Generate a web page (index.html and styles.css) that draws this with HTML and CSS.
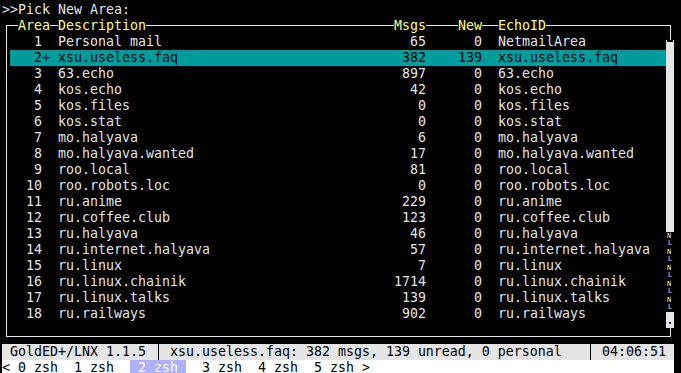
FILE: index.html
```html
<!DOCTYPE html>
<html lang="en">
<head>
    <meta charset="UTF-8">
    <meta name="viewport" content="width=device-width, initial-scale=1.0">
    <title>GoldED+ - Pick New Area</title>
    <link rel="stylesheet" href="styles.css">
</head>
<body>
    <div class="screen">
        <div class="line">&gt;&gt;Pick New Area:</div>

        <!-- Area list window -->
        <div class="panel">
            <div class="area-row area-head">
                <div class="col-num"><span class="label">Area</span></div>
                <div class="col-flag"></div>
                <div class="col-desc"><span class="label">Description</span></div>
                <div class="col-msgs"><span class="label">Msgs</span></div>
                <div class="col-new"><span class="label">New</span></div>
                <div class="col-echo"><span class="label">EchoID</span></div>
            </div>

            <div class="panel-body">
                <div class="area-list">
                    <div class="area-row"><div class="col-num">1</div><div class="col-flag"></div><div class="col-desc">Personal mail</div><div class="col-msgs">65</div><div class="col-new">0</div><div class="col-echo">NetmailArea</div></div>
                    <div class="area-row selected"><div class="col-num">2</div><div class="col-flag">+</div><div class="col-desc">xsu.useless.faq</div><div class="col-msgs">382</div><div class="col-new">139</div><div class="col-echo">xsu.useless.faq</div></div>
                    <div class="area-row"><div class="col-num">3</div><div class="col-flag"></div><div class="col-desc">63.echo</div><div class="col-msgs">897</div><div class="col-new">0</div><div class="col-echo">63.echo</div></div>
                    <div class="area-row"><div class="col-num">4</div><div class="col-flag"></div><div class="col-desc">kos.echo</div><div class="col-msgs">42</div><div class="col-new">0</div><div class="col-echo">kos.echo</div></div>
                    <div class="area-row"><div class="col-num">5</div><div class="col-flag"></div><div class="col-desc">kos.files</div><div class="col-msgs">0</div><div class="col-new">0</div><div class="col-echo">kos.files</div></div>
                    <div class="area-row"><div class="col-num">6</div><div class="col-flag"></div><div class="col-desc">kos.stat</div><div class="col-msgs">0</div><div class="col-new">0</div><div class="col-echo">kos.stat</div></div>
                    <div class="area-row"><div class="col-num">7</div><div class="col-flag"></div><div class="col-desc">mo.halyava</div><div class="col-msgs">6</div><div class="col-new">0</div><div class="col-echo">mo.halyava</div></div>
                    <div class="area-row"><div class="col-num">8</div><div class="col-flag"></div><div class="col-desc">mo.halyava.wanted</div><div class="col-msgs">17</div><div class="col-new">0</div><div class="col-echo">mo.halyava.wanted</div></div>
                    <div class="area-row"><div class="col-num">9</div><div class="col-flag"></div><div class="col-desc">roo.local</div><div class="col-msgs">81</div><div class="col-new">0</div><div class="col-echo">roo.local</div></div>
                    <div class="area-row"><div class="col-num">10</div><div class="col-flag"></div><div class="col-desc">roo.robots.loc</div><div class="col-msgs">0</div><div class="col-new">0</div><div class="col-echo">roo.robots.loc</div></div>
                    <div class="area-row"><div class="col-num">11</div><div class="col-flag"></div><div class="col-desc">ru.anime</div><div class="col-msgs">229</div><div class="col-new">0</div><div class="col-echo">ru.anime</div></div>
                    <div class="area-row"><div class="col-num">12</div><div class="col-flag"></div><div class="col-desc">ru.coffee.club</div><div class="col-msgs">123</div><div class="col-new">0</div><div class="col-echo">ru.coffee.club</div></div>
                    <div class="area-row"><div class="col-num">13</div><div class="col-flag"></div><div class="col-desc">ru.halyava</div><div class="col-msgs">46</div><div class="col-new">0</div><div class="col-echo">ru.halyava</div></div>
                    <div class="area-row"><div class="col-num">14</div><div class="col-flag"></div><div class="col-desc">ru.internet.halyava</div><div class="col-msgs">57</div><div class="col-new">0</div><div class="col-echo">ru.internet.halyava</div></div>
                    <div class="area-row"><div class="col-num">15</div><div class="col-flag"></div><div class="col-desc">ru.linux</div><div class="col-msgs">7</div><div class="col-new">0</div><div class="col-echo">ru.linux</div></div>
                    <div class="area-row"><div class="col-num">16</div><div class="col-flag"></div><div class="col-desc">ru.linux.chainik</div><div class="col-msgs">1714</div><div class="col-new">0</div><div class="col-echo">ru.linux.chainik</div></div>
                    <div class="area-row"><div class="col-num">17</div><div class="col-flag"></div><div class="col-desc">ru.linux.talks</div><div class="col-msgs">139</div><div class="col-new">0</div><div class="col-echo">ru.linux.talks</div></div>
                    <div class="area-row"><div class="col-num">18</div><div class="col-flag"></div><div class="col-desc">ru.railways</div><div class="col-msgs">902</div><div class="col-new">0</div><div class="col-echo">ru.railways</div></div>
                </div>

                <!-- Scrollbar column -->
                <div class="scrollbar">
                    <div class="sb-cell"><span class="sb-thumb"></span></div>
                    <div class="sb-cell"></div>
                    <div class="sb-cell"></div>
                    <div class="sb-cell"></div>
                    <div class="sb-cell"></div>
                    <div class="sb-cell"></div>
                    <div class="sb-cell"></div>
                    <div class="sb-cell"></div>
                    <div class="sb-cell"></div>
                    <div class="sb-cell"></div>
                    <div class="sb-cell"></div>
                    <div class="sb-cell"></div>
                    <div class="sb-cell sb-nl"><span>N</span><span class="nl-l">L</span></div>
                    <div class="sb-cell sb-nl"><span>N</span><span class="nl-l">L</span></div>
                    <div class="sb-cell sb-nl"><span>N</span><span class="nl-l">L</span></div>
                    <div class="sb-cell sb-nl"><span>N</span><span class="nl-l">L</span></div>
                    <div class="sb-cell sb-nl"><span>N</span><span class="nl-l">L</span></div>
                    <div class="sb-cell">.</div>
                </div>
            </div>
        </div>

        <!-- Status line -->
        <div class="status">
            <div class="st-version">GoldED+/LNX 1.1.5</div>
            <div class="st-info">xsu.useless.faq: 382 msgs, 139 unread, 0 personal</div>
            <div class="st-time">04:06:51</div>
        </div>

        <!-- Screen window list -->
        <div class="tabs">
            <span>&lt;</span>
            <div class="tab-list">
                <span class="tab">0 zsh</span>
                <span class="tab">1 zsh</span>
                <span class="tab active">2 zsh</span>
                <span class="tab">3 zsh</span>
                <span class="tab">4 zsh</span>
                <span class="tab">5 zsh</span>
            </div>
            <span>&gt;</span>
        </div>
    </div>
</body>
</html>
```

FILE: styles.css
```css
* {
    margin: 0;
    padding: 0;
    box-sizing: border-box;
}

body {
    background-color: #000;
    color: #e5e5e5;
    font-family: "DejaVu Sans Mono", monospace;
    font-size: 13.29px;
    line-height: 16px;
}

.screen {
    width: 681px;
    min-height: 373px;
    padding: 2px;
}

.line {
    white-space: pre;
}

/* window with the area list */
.panel {
    width: 665px;
    margin: 7px 0 7px 4px;
    padding: 0 0 8px 3px;
    border: 1px solid #e5e5e5;
}

.area-head {
    margin-top: -8px;
    color: #ffff87;
}

.area-head .col-num {
    padding-left: 8px;
    text-align: left;
    overflow: visible;
}

.label {
    background-color: #000;
}

.panel-body {
    display: flex;
}

.area-list {
    flex: none;
    width: 656px;
}

.area-row {
    display: grid;
    grid-template-columns: 32px 16px 304px 64px 56px 1fr;
    height: 16px;
    white-space: pre;
}

.area-row.selected {
    background-color: #009c9c;
    color: #000;
}

.col-num,
.col-msgs,
.col-new {
    text-align: right;
}

.col-echo {
    padding-left: 16px;
}

/* scrollbar replaces the right frame */
.scrollbar {
    flex: none;
    width: 8px;
    margin-right: -4px;
}

.sb-cell {
    height: 16px;
    background-color: #e5e5e5;
    color: #000;
    text-align: center;
}

.sb-thumb {
    display: block;
    width: 6px;
    height: 2px;
    margin: 6px 0 0 1px;
    background-color: #000;
}

/* newline marker: small N over L */
.sb-cell.sb-nl {
    display: flex;
    flex-direction: column;
    padding: 1px 0 0 1px;
    background-color: #000;
    color: #e5e5e5;
    font-size: 7px;
    line-height: 7px;
    text-align: left;
}

.nl-l {
    padding-left: 1px;
}

/* status line */
.status {
    display: flex;
    width: 672px;
    background-color: #e5e5e5;
    color: #000;
    white-space: pre;
}

.st-version {
    width: 156px;
    padding-left: 8px;
}

.st-info {
    flex: 1;
    padding-left: 11px;
    border-left: 1px solid #000;
}

.st-time {
    width: 84px;
    padding-left: 11px;
    border-left: 1px solid #000;
}

/* screen windows */
.tabs {
    display: flex;
    gap: 8px;
    width: 672px;
    background-color: #fff;
    color: #000;
    white-space: pre;
}

.tab-list {
    display: flex;
    gap: 16px;
}

.tab.active {
    padding: 0 8px;
    background-color: #afafff;
    color: #fff;
}
```
